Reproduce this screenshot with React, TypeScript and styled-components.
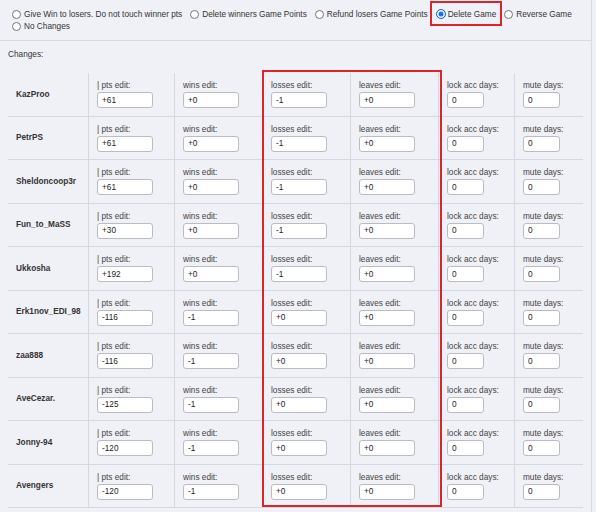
import React from "react";
import styled, { createGlobalStyle } from "styled-components";

type PlayerChange = {
  name: string;
  pts: string;
  wins: string;
  losses: string;
  leaves: string;
  lock: string;
  mute: string;
};

const players: PlayerChange[] = [
  { name: "KazProo", pts: "+61", wins: "+0", losses: "-1", leaves: "+0", lock: "0", mute: "0" },
  { name: "PetrPS", pts: "+61", wins: "+0", losses: "-1", leaves: "+0", lock: "0", mute: "0" },
  { name: "Sheldoncoop3r", pts: "+61", wins: "+0", losses: "-1", leaves: "+0", lock: "0", mute: "0" },
  { name: "Fun_to_MaSS", pts: "+30", wins: "+0", losses: "-1", leaves: "+0", lock: "0", mute: "0" },
  { name: "Ukkosha", pts: "+192", wins: "+0", losses: "-1", leaves: "+0", lock: "0", mute: "0" },
  { name: "Erk1nov_EDI_98", pts: "-116", wins: "-1", losses: "+0", leaves: "+0", lock: "0", mute: "0" },
  { name: "zaa888", pts: "-116", wins: "-1", losses: "+0", leaves: "+0", lock: "0", mute: "0" },
  { name: "AveCezar.", pts: "-125", wins: "-1", losses: "+0", leaves: "+0", lock: "0", mute: "0" },
  { name: "Jonny-94", pts: "-120", wins: "-1", losses: "+0", leaves: "+0", lock: "0", mute: "0" },
  { name: "Avengers", pts: "-120", wins: "-1", losses: "+0", leaves: "+0", lock: "0", mute: "0" },
];

const options = [
  "Give Win to losers. Do not touch winner pts",
  "Delete winners Game Points",
  "Refund losers Game Points",
  "Delete Game",
  "Reverse Game",
  "No Changes",
];

const GlobalStyle = createGlobalStyle`
  html, body {
    margin: 0;
    padding: 0;
    background: #f0f1f6;
  }
  body {
    font-family: "Liberation Sans", Arial, sans-serif;
    font-size: 8.25px;
    color: #333;
  }
`;

const App: React.FC = () => {
  return (
    <>
      <GlobalStyle />
      <Panel>
        <OptionsBar>
          {options.map((label) => (
            <Option key={label} highlighted={label === "Delete Game"}>
              <Radio checked={label === "Delete Game"} />
              <span>{label}</span>
            </Option>
          ))}
        </OptionsBar>
        <ChangesSection>
          <Caption>Changes:</Caption>
          <Table>
            {players.map((p) => (
              <Row key={p.name}>
                <NameCell>{p.name}</NameCell>
                <EditCell>
                  <Label>| pts edit:</Label>
                  <Field defaultValue={p.pts} />
                </EditCell>
                <EditCell>
                  <Label>wins edit:</Label>
                  <Field defaultValue={p.wins} />
                </EditCell>
                <EditCell>
                  <Label>losses edit:</Label>
                  <Field defaultValue={p.losses} />
                </EditCell>
                <EditCell>
                  <Label>leaves edit:</Label>
                  <Field defaultValue={p.leaves} />
                </EditCell>
                <EditCell>
                  <Label>lock acc days:</Label>
                  <Field small defaultValue={p.lock} />
                </EditCell>
                <EditCell>
                  <Label>mute days:</Label>
                  <Field small defaultValue={p.mute} />
                </EditCell>
              </Row>
            ))}
            <HighlightBox />
          </Table>
        </ChangesSection>
      </Panel>
    </>
  );
};

const Panel = styled.div`
  width: 592px;
  min-height: 512px;
  border-right: 1px solid #d6dae3;
  box-sizing: border-box;
`;

const OptionsBar = styled.div`
  display: flex;
  flex-wrap: wrap;
  align-content: flex-start;
  align-items: center;
  padding: 8px 0 0 9px;
  height: 41px;
  box-sizing: border-box;
  border-bottom: 1px solid #d6dae3;
`;

const Option = styled.label<{ highlighted?: boolean }>`
  position: relative;
  display: inline-flex;
  align-items: center;
  height: 12px;
  margin-right: 5px;
  white-space: nowrap;
  color: #333;

  &::after {
    content: "";
    display: ${(p) => (p.highlighted ? "block" : "none")};
    position: absolute;
    left: -3px;
    right: -6px;
    top: -7px;
    bottom: -6px;
    border: 2px solid #d9252b;
  }
`;

const Radio = styled.span<{ checked?: boolean }>`
  display: inline-block;
  box-sizing: border-box;
  width: ${(p) => (p.checked ? "10px" : "9px")};
  height: ${(p) => (p.checked ? "10px" : "9px")};
  margin: 0 ${(p) => (p.checked ? "2px" : "3px")} 0 3px;
  border-radius: 50%;
  border: 1px solid ${(p) => (p.checked ? "#1a73e8" : "#767676")};
  background: ${(p) => (p.checked ? "#1a73e8" : "#fff")};
  box-shadow: ${(p) => (p.checked ? "inset 0 0 0 1.5px #fff" : "none")};
`;

const ChangesSection = styled.div`
  padding: 8px 0 0 8px;
`;

const Caption = styled.div`
  line-height: 12px;
  margin-bottom: 12px;
  color: #333;
`;

const Table = styled.div`
  position: relative;
  width: 575px;
`;

const Row = styled.div`
  display: grid;
  grid-template-columns: 80px 86px 88px 88px 88px 76px 69px;
  height: 43.5px;
  border-bottom: 1px solid #d3d8e3;
  box-sizing: border-box;
`;

const NameCell = styled.div`
  display: flex;
  align-items: center;
  padding-left: 8px;
  font-weight: bold;
  color: #333;
`;

const EditCell = styled.div`
  display: flex;
  flex-direction: column;
  padding: 8px 0 0 8px;
  border-left: 1px solid #d3d8e3;
`;

const Label = styled.div`
  line-height: 10px;
  margin-bottom: 1px;
  color: #444;
`;

const Field = styled.input<{ small?: boolean }>`
  width: ${(p) => (p.small ? "37px" : "56px")};
  height: 16px;
  box-sizing: border-box;
  padding: 0 4px;
  border: 1px solid #b9bcc2;
  border-radius: 3px;
  background: #fff;
  font-family: "Liberation Sans", Arial, sans-serif;
  font-size: 8.25px;
  color: #222;
  outline: none;
`;

const HighlightBox = styled.div`
  position: absolute;
  left: 254px;
  width: 176px;
  top: -3px;
  bottom: 1px;
  border: 2px solid #d9252b;
  pointer-events: none;
`;

export default App;
